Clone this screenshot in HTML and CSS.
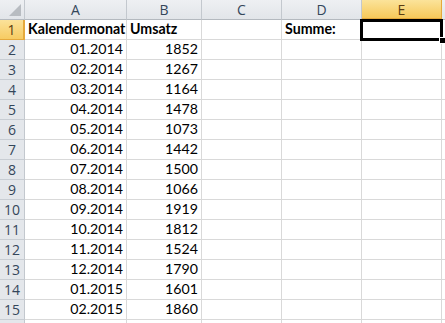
FILE: index.html
```html
<!DOCTYPE html>
<html>
<head>
  <title>Umsatz</title>
  <link rel="stylesheet" href="styles.css">
</head>
<body>
  <div class="sheet">
    <div class="corner"><span class="tri"></span></div>
    <div class="colhead">A</div>
    <div class="colhead">B</div>
    <div class="colhead">C</div>
    <div class="colhead">D</div>
    <div class="colhead active">E</div>
    <div class="colhead fill"></div>

    <div class="rowhead active">1</div>
    <div class="cell bold">Kalendermonat</div>
    <div class="cell bold">Umsatz</div>
    <div class="cell"></div>
    <div class="cell bold">Summe:</div>
    <div class="cell selected"><span class="sel"></span><span class="handle"></span></div>
    <div class="cell fill"></div>
  </div>

  <script>
    const data = [
      ["01.2014", 1852], ["02.2014", 1267], ["03.2014", 1164], ["04.2014", 1478],
      ["05.2014", 1073], ["06.2014", 1442], ["07.2014", 1500], ["08.2014", 1066],
      ["09.2014", 1919], ["10.2014", 1812], ["11.2014", 1524], ["12.2014", 1790],
      ["01.2015", 1601], ["02.2015", 1860]
    ];
    const sheet = document.querySelector(".sheet");
    data.forEach(function (row, i) {
      let html = '<div class="rowhead">' + (i + 2) + '</div>';
      html += '<div class="cell num">' + row[0] + '</div>';
      html += '<div class="cell num">' + row[1] + '</div>';
      html += '<div class="cell"></div><div class="cell"></div><div class="cell"></div><div class="cell fill"></div>';
      sheet.insertAdjacentHTML("beforeend", html);
    });
    // partly visible row below the last one
    sheet.insertAdjacentHTML("beforeend", '<div class="rowhead"></div>' + '<div class="cell"></div>'.repeat(5) + '<div class="cell fill"></div>');
  </script>
</body>
</html>
```

FILE: styles.css
```css
body {
  margin: 0;
  background: #fff;
  overflow: hidden;
}

.sheet {
  display: grid;
  grid-template-columns: 25px 102px 75px 80px 80px 80px 1fr;
  grid-auto-rows: 20px;
  font-family: Lato, "Open Sans", sans-serif;
  font-size: 14.2px;
  color: #000;
}

.corner, .colhead, .rowhead {
  box-sizing: border-box;
  background: linear-gradient(#eef0f3, #e2e5e9);
  border-right: 1px solid #c3c8ce;
  border-bottom: 1px solid #b4b9bf;
  color: #34465a;
  font-family: "Open Sans", "DejaVu Sans", sans-serif;
  font-size: 14px;
}

.corner {
  position: relative;
}

.tri {
  position: absolute;
  right: 3px;
  bottom: 3px;
  width: 0;
  height: 0;
  border-left: 12px solid transparent;
  border-bottom: 12px solid #b8bcc1;
}

.colhead {
  display: flex;
  align-items: center;
  justify-content: center;
}

.rowhead {
  display: flex;
  align-items: center;
  justify-content: center;
  background: #e4e7eb;
  border-bottom: 1px solid #c8cdd3;
}

.colhead.active {
  background: linear-gradient(#fbe39a, #f6c85a);
  border-right: 1px solid #e5a93c;
  border-bottom: 2px solid #e5a93c;
  color: #5a3c12;
}

.rowhead.active {
  background: linear-gradient(#fbe29a, #f7cb62);
  border-right: 2px solid #e5a93c;
  border-bottom: 1px solid #e5a93c;
  color: #5a3c12;
}

.fill {
  border-right: none;
}

.cell {
  box-sizing: border-box;
  border-right: 1px solid #d9d9d9;
  border-bottom: 1px solid #d9d9d9;
  display: flex;
  align-items: flex-end;
  padding: 0 3px 1px 3px;
  line-height: 18px;
  white-space: nowrap;
}

.cell.fill {
  border-right: none;
}

.bold {
  font-weight: bold;
}

.num {
  justify-content: flex-end;
}

.selected {
  position: relative;
}

.sel {
  position: absolute;
  left: -2px;
  top: -1px;
  right: -2px;
  bottom: -2px;
  border: 3px solid #000;
}

.handle {
  position: absolute;
  right: -5px;
  bottom: -5px;
  width: 5px;
  height: 5px;
  background: #000;
  border: 1px solid #fff;
}
```
